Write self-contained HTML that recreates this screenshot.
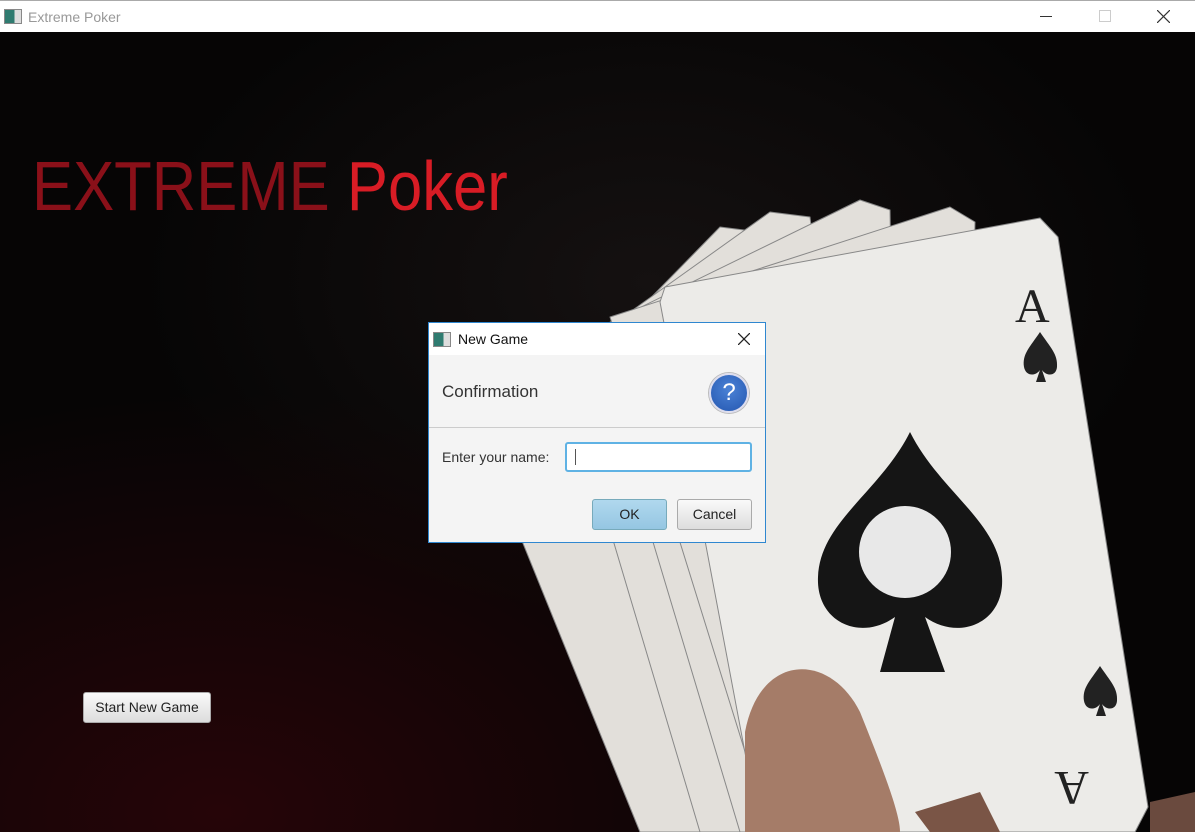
<!DOCTYPE html>
<html><head><style>
body{margin:0;width:1195px;height:832px;overflow:hidden;font-family:"Liberation Sans",sans-serif;background:#000}
.tb{position:absolute;left:0;top:0;width:1195px;height:32px;background:#fff;border-top:1px solid #aaa;box-sizing:border-box}
.tb .t{position:absolute;left:28px;top:8px;font-size:14px;color:#999}
.ic{position:absolute;width:16px;height:13px;border:1px solid #888;background:linear-gradient(90deg,#2f7b70 0 60%,#ddd 60%)}
.scene{position:absolute;left:0;top:32px;width:1195px;height:800px;background:radial-gradient(ellipse 650px 420px at 220px 780px,#260508,transparent),radial-gradient(ellipse 600px 400px at 650px 250px,#151111,#060505 85%)}
.title{position:absolute;left:32px;top:114px;font-size:70px;color:#8a1019;transform:scaleX(0.88);transform-origin:left;white-space:nowrap}
.title span{color:#d81c25}
.btn{position:absolute;left:83px;top:692px;width:128px;height:31px;background:linear-gradient(#fafafa,#ddd);border:1px solid #aaa;border-radius:3px;font-size:14px;color:#222;text-align:center;line-height:29px;box-sizing:border-box}
.dlg{position:absolute;left:428px;top:322px;width:338px;height:221px;background:#f4f4f4;border:1px solid #2f87d0;box-sizing:border-box}
.dh{height:32px;background:#fff;position:relative}
.dh .t{position:absolute;left:29px;top:8px;font-size:14px;color:#111}
.conf{position:absolute;left:13px;top:59px;font-size:17px;color:#333}
.q{position:absolute;left:280px;top:50px;width:36px;height:36px;border-radius:50%;background:radial-gradient(circle at 50% 40%,#4b82d6,#2457b0);border:2px solid #dde;box-shadow:0 0 0 1px #bbb;color:#fff;font-size:24px;text-align:center;line-height:36px}
.hr{position:absolute;left:0;top:104px;width:336px;height:1px;background:#ccc}
.lbl{position:absolute;left:13px;top:126px;font-size:14px;color:#333}
.inp{position:absolute;left:136px;top:119px;width:187px;height:30px;border:2px solid #5fb2e4;border-radius:3px;background:#fff;box-sizing:border-box}
.inp:after{content:"";position:absolute;left:8px;top:5px;width:1px;height:16px;background:#555}
.b{position:absolute;top:176px;height:31px;border:1px solid #aaa;border-radius:3px;font-size:14px;text-align:center;line-height:29px;box-sizing:border-box;color:#222}
</style></head><body>
<div class="tb"><div class="ic" style="left:4px;top:8px"></div><div class="t">Extreme Poker</div>
<div style="position:absolute;left:1040px;top:15px;width:12px;height:1px;background:#333"></div>
<div style="position:absolute;left:1099px;top:9px;width:10px;height:10px;border:1px solid #ccc"></div>
<svg style="position:absolute;left:1157px;top:9px" width="13" height="13"><path d="M0,0L13,13M13,0L0,13" stroke="#333" stroke-width="1.2"/></svg></div>
<div class="scene">
<svg width="1195" height="800" style="position:absolute;left:0;top:0">
<g fill="#e2dfda" stroke="#888" stroke-width="1" stroke-linejoin="round">
<polygon points="490,430 720,195 760,200 800,800 640,800"/>
<polygon points="560,330 770,180 810,185 880,800 700,800"/>
<polygon points="590,300 860,168 890,178 900,800 740,800"/>
<polygon points="610,285 950,175 975,190 960,800 770,800"/>
<polygon points="665,255 1040,186 1058,205 1148,775 1135,800 760,800 660,270" fill="#ecebe8"/>
</g>
<path d="M910,400 C880,460 820,490 818,545 C816,590 860,610 895,585 L880,640 L945,640 L925,585 C960,610 1005,590 1002,545 C1000,490 940,460 910,400Z" fill="#151515"/>
<circle cx="905" cy="520" r="46" fill="#e8e8e8"/>
<text x="1015" y="290" font-size="48" font-family="Liberation Serif" fill="#222">A</text>
<path d="M1040,300 C1030,315 1022,322 1024,335 C1026,345 1036,344 1040,338 L1036,350 L1046,350 L1042,338 C1046,344 1056,345 1057,335 C1058,322 1050,315 1040,300Z" fill="#222"/>
<path d="M1100,634 C1090,649 1082,656 1084,669 C1086,679 1096,678 1100,672 L1096,684 L1106,684 L1102,672 C1106,678 1116,679 1117,669 C1118,656 1110,649 1100,634Z" fill="#222"/>
<text x="1125" y="700" font-size="48" font-family="Liberation Serif" fill="#222" transform="rotate(180 1107 720)">A</text>
<path d="M745,800 L745,700 C760,620 830,620 860,680 C880,730 900,780 900,800Z" fill="#a57c68"/>
<path d="M1150,770 L1195,760 L1195,800 L1150,800Z" fill="#6a4a3e"/>
<path d="M915,780 L980,760 L1000,800 L930,800Z" fill="#7a5546"/>
</svg>
<div class="title">EXTREME <span>Poker</span></div>
</div>
<div class="btn">Start New Game</div>
<div class="dlg">
<div class="dh"><div class="ic" style="left:4px;top:9px"></div><div class="t">New Game</div><svg style="position:absolute;left:309px;top:10px" width="12" height="12"><path d="M0,0L12,12M12,0L0,12" stroke="#222" stroke-width="1.3"/></svg></div>
<div class="conf">Confirmation</div><div class="q">?</div><div class="hr"></div>
<div class="lbl">Enter your name:</div><div class="inp"></div>
<div class="b" style="left:163px;width:75px;background:linear-gradient(#b0d8ee,#95c6e2);border-color:#7ab">OK</div>
<div class="b" style="left:248px;width:75px;background:linear-gradient(#fafafa,#ddd)">Cancel</div>
</div>
</body></html>
